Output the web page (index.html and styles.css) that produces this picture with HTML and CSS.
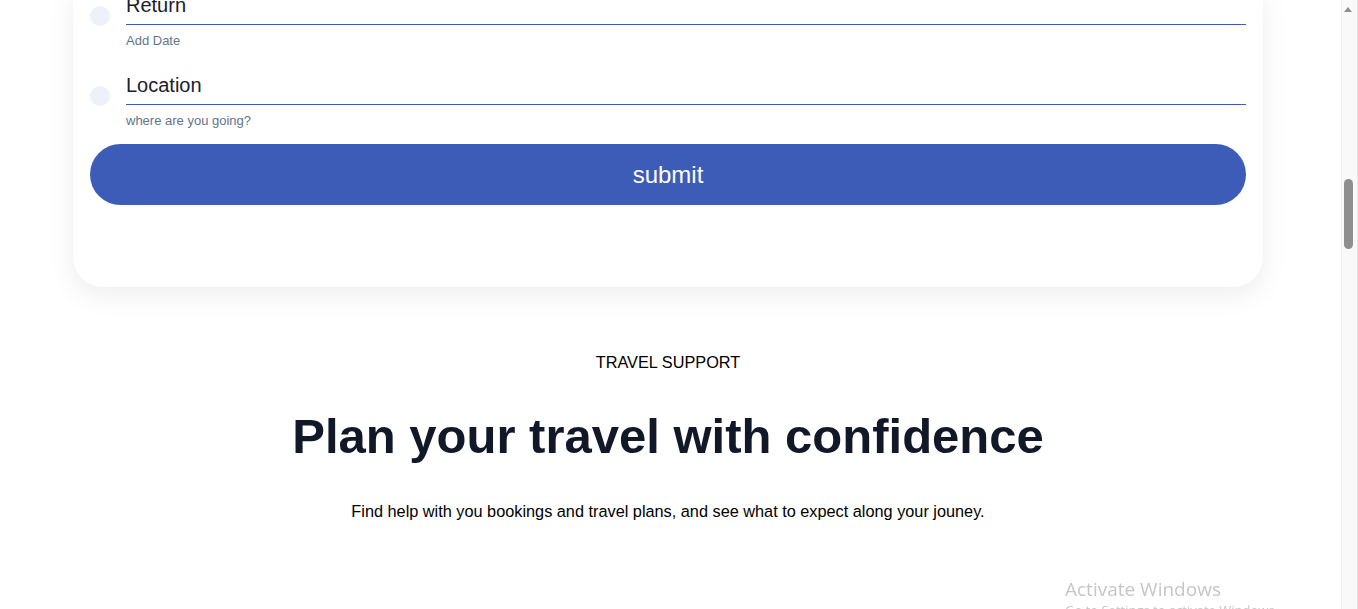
FILE: index.html
```html
<!DOCTYPE html>
<html lang="en">
<head>
<meta charset="utf-8">
<title>Travel</title>
<link rel="stylesheet" href="styles.css">
</head>
<body>
<div class="page">
  <main class="main">
    <section class="card">
      <div class="row">
        <span class="dot"></span>
        <div class="field">
          <div class="input">Return</div>
          <div class="hint">Add Date</div>
        </div>
      </div>
      <div class="row">
        <span class="dot"></span>
        <div class="field">
          <div class="input">Location</div>
          <div class="hint">where are you going?</div>
        </div>
      </div>
      <button class="submit" type="button">submit</button>
    </section>

    <section class="support">
      <p class="eyebrow">TRAVEL SUPPORT</p>
      <h1 class="title">Plan your travel with confidence</h1>
      <p class="lead">Find help with you bookings and travel plans, and see what to expect along your jouney.</p>
    </section>
  </main>
  <aside class="scrollbar">
    <span class="arrow"></span>
    <span class="thumb"></span>
  </aside>
</div>
<div class="watermark">
  <div class="wm-title">Activate Windows</div>
  <div class="wm-sub">Go to Settings to activate Windows.</div>
</div>
</body>
</html>
```

FILE: styles.css
```css
html, body {
  margin: 0;
  padding: 0;
  height: 100%;
  overflow: hidden;
  background: #ffffff;
  font-family: "Liberation Sans", Arial, sans-serif;
}

.page {
  display: flex;
  height: 609px;
  overflow: hidden;
}

.main {
  width: 1341px;
  flex: none;
  padding-right: 5px;
  box-sizing: border-box;
}

.card {
  margin: -27px 73px 0 73px;
  padding: 20px 17px 82px 17px;
  background: #ffffff;
  border-radius: 30px;
  box-shadow: 0 8px 28px rgba(0, 0, 0, 0.075);
}

.row {
  display: flex;
  align-items: flex-start;
  margin-bottom: 25px;
}

.row:last-of-type {
  margin-bottom: 16px;
}

.dot {
  flex: none;
  width: 20px;
  height: 20px;
  border-radius: 50%;
  background: #eef2f8;
  margin-top: 13px;
}

.field {
  flex: 1;
  margin-left: 16px;
}

.input {
  font-size: 20px;
  line-height: 24px;
  color: #1a202c;
  padding-bottom: 7px;
  border-bottom: 1px solid #3d5cb7;
}

.hint {
  margin-top: 8px;
  font-size: 13px;
  line-height: 15px;
  color: #64748b;
}

.submit {
  display: block;
  width: 100%;
  height: 61px;
  border: none;
  border-radius: 31px;
  background: #3d5cb7;
  color: #ffffff;
  font-family: "Liberation Sans", Arial, sans-serif;
  font-size: 24px;
  line-height: 61px;
  padding: 0;
  cursor: pointer;
}

.support {
  text-align: center;
  padding-top: 66px;
}

.eyebrow {
  margin: 0;
  font-size: 16.3px;
  line-height: 19px;
  color: #000000;
}

.title {
  margin: 36px 0 0 0;
  font-size: 49px;
  line-height: 56px;
  font-weight: 700;
  color: #111827;
}

.lead {
  margin: 38px 0 0 0;
  font-size: 16.3px;
  line-height: 19px;
  color: #000000;
}

.scrollbar {
  flex: none;
  width: 17px;
  background: #f9f9f9;
  border-left: 1px solid #f0f0f0;
  border-right: 1px solid #e4e4e4;
  padding-right: 3px;
  box-sizing: border-box;
  display: flex;
  flex-direction: column;
  align-items: center;
}

.arrow {
  margin-top: 7px;
  width: 0;
  height: 0;
  border-left: 4px solid transparent;
  border-right: 4px solid transparent;
  border-bottom: 5px solid #8f8f8f;
}

.thumb {
  margin-top: 167px;
  width: 9px;
  height: 70px;
  border-radius: 5px;
  background: #8f8f8f;
}

.watermark {
  position: fixed;
  left: 1065px;
  top: 577px;
  font-family: "Open Sans", "Noto Sans", sans-serif;
  color: rgba(150, 150, 150, 0.55);
  pointer-events: none;
}

.wm-title {
  font-size: 19px;
  line-height: 24px;
}

.wm-sub {
  font-size: 13px;
  line-height: 18px;
}
```
